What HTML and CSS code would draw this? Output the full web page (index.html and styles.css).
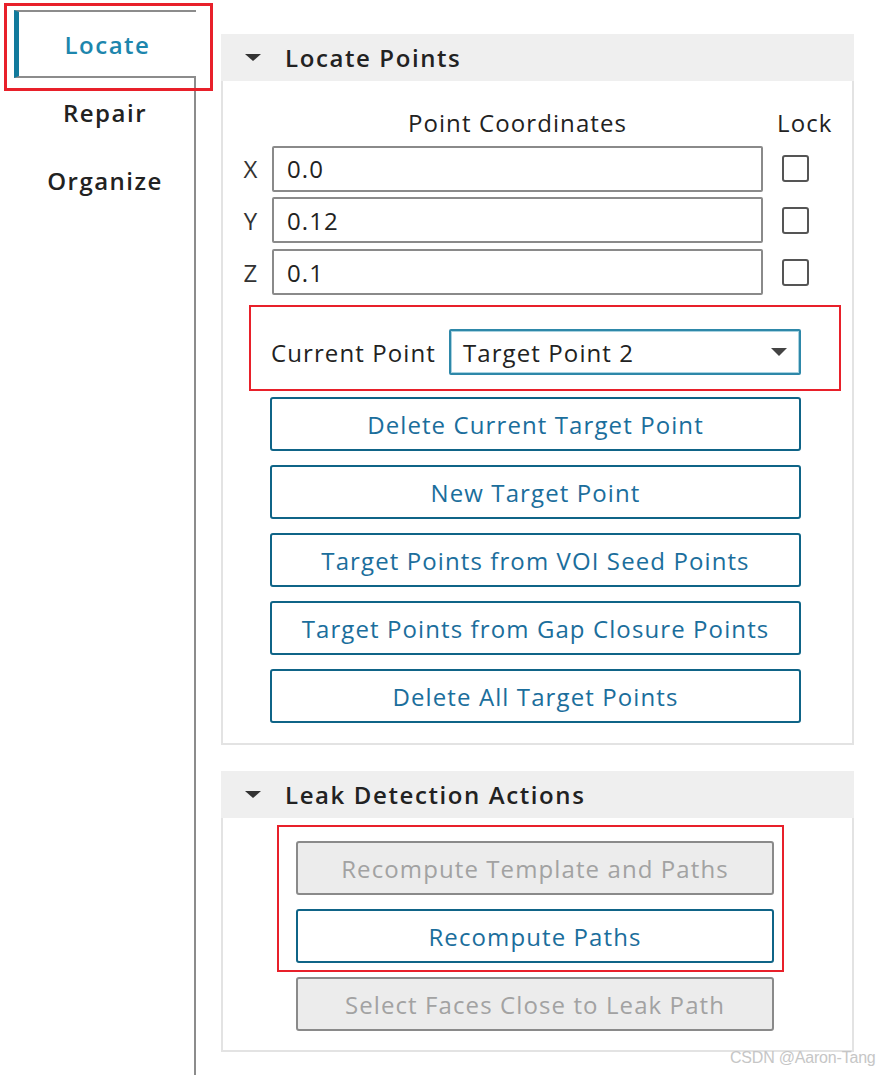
FILE: index.html
```html
<!DOCTYPE html>
<html>
<head>
<meta charset="utf-8">
<link rel="stylesheet" href="styles.css">
</head>
<body>
<div class="page">
  <nav class="nav">
    <div class="tab tab-active">Locate</div>
    <div class="nav-rest">
      <div class="tab">Repair</div>
      <div class="tab">Organize</div>
    </div>
  </nav>
  <main class="content">
    <section class="panel">
      <div class="panel-head"><span class="caret-down"></span><span class="panel-title">Locate Points</span></div>
      <div class="panel-body body-locate">
        <div class="coord-grid">
          <div></div>
          <div class="col-head">Point Coordinates</div>
          <div class="col-head lock-head">Lock</div>

          <div class="axis">X</div>
          <div class="field">0.0</div>
          <div class="check-cell"><span class="check"></span></div>

          <div class="axis">Y</div>
          <div class="field">0.12</div>
          <div class="check-cell"><span class="check"></span></div>

          <div class="axis">Z</div>
          <div class="field">0.1</div>
          <div class="check-cell"><span class="check"></span></div>
        </div>
        <div class="actions">
          <div class="current-row">
            <span class="current-label">Current Point</span>
            <div class="select"><span>Target Point 2</span><span class="select-caret"></span></div>
          </div>
          <div class="btn">Delete Current Target Point</div>
          <div class="btn">New Target Point</div>
          <div class="btn">Target Points from VOI Seed Points</div>
          <div class="btn">Target Points from Gap Closure Points</div>
          <div class="btn">Delete All Target Points</div>
        </div>
      </div>
    </section>
    <section class="panel panel-leak">
      <div class="panel-head"><span class="caret-down"></span><span class="panel-title">Leak Detection Actions</span></div>
      <div class="panel-body body-leak">
        <div class="btn btn-disabled">Recompute Template and Paths</div>
        <div class="btn">Recompute Paths</div>
        <div class="btn btn-disabled">Select Faces Close to Leak Path</div>
      </div>
    </section>
  </main>
</div>
<div class="mark mark-1"></div>
<div class="mark mark-2"></div>
<div class="mark mark-3"></div>
<div class="watermark">CSDN @Aaron-Tang</div>
</body>
</html>
```
FILE: styles.css
```css
html, body {
  margin: 0;
  padding: 0;
  background: #ffffff;
}
body {
  font-family: "Open Sans", "Noto Sans", sans-serif;
  font-size: 24px;
  letter-spacing: 1.1px;
  color: #222;
  width: 880px;
  height: 1075px;
  overflow: hidden;
  position: relative;
}
.page {
  display: flex;
  height: 1075px;
}
.nav {
  width: 196px;
  padding-top: 10px;
  display: flex;
  flex-direction: column;
  box-sizing: border-box;
}
.tab {
  height: 68px;
  display: flex;
  align-items: center;
  justify-content: center;
  font-weight: 600;
  letter-spacing: 1.5px;
  color: #222;
  box-sizing: border-box;
}
.tab-active {
  margin-left: 14px;
  height: 68px;
  border-top: 2px solid #8c8c8c;
  border-bottom: 2px solid #8c8c8c;
  border-left: 5px solid #127a9c;
  color: #1d86ad;
}
.nav-rest {
  flex: 1;
  border-right: 2px solid #8c8c8c;
}
.nav-rest .tab {
  padding-left: 16px;
}
.content {
  margin-left: 25px;
  width: 633px;
  padding-top: 34px;
}
.panel-head {
  height: 47px;
  background: #efefef;
  display: flex;
  align-items: center;
  font-weight: 600;
  letter-spacing: 1.6px;
  color: #222;
}
.caret-down {
  width: 0;
  height: 0;
  border-left: 8px solid transparent;
  border-right: 8px solid transparent;
  border-top: 7px solid #333;
  margin-left: 24px;
  margin-right: 24px;
}
.panel-body {
  border: 2px solid #e3e3e3;
  border-top: none;
  box-sizing: border-box;
  width: 633px;
}
.body-locate {
  padding: 26px 0 20px 7px;
  height: 664px;
}
.coord-grid {
  display: grid;
  grid-template-columns: 42px 491px 65px;
  grid-template-rows: 32px 46px 46px 46px;
  row-gap: 6px;
  align-items: center;
}
.col-head {
  text-align: center;
  color: #222;
  line-height: 32px;
  align-self: start;
}
.lock-head {
  padding-left: 14px;
}
.coord-grid > :nth-child(5) { margin-top: 1px; }
.axis {
  text-align: center;
  color: #333;
}
.field {
  height: 46px;
  border: 2px solid #8a8a8a;
  border-radius: 2px;
  box-sizing: border-box;
  padding-left: 13px;
  display: flex;
  align-items: center;
  color: #222;
}
.check-cell {
  display: flex;
  justify-content: center;
}
.check {
  width: 27px;
  height: 27px;
  border: 2px solid #555;
  border-radius: 3px;
  box-sizing: border-box;
  background: #fff;
}
.actions {
  margin-left: 40px;
  width: 531px;
  display: flex;
  flex-direction: column;
  gap: 14px;
}
.current-row {
  display: flex;
  align-items: center;
  margin-top: 34px;
  margin-bottom: 8px;
  padding-left: 1px;
}
.current-label {
  color: #222;
}
.select {
  flex: 1;
  margin-left: 13px;
  height: 46px;
  border: 2px solid #2e88a9;
  box-shadow: inset 0 0 0 1px #a8d2e0;
  border-radius: 2px;
  box-sizing: border-box;
  display: flex;
  align-items: center;
  justify-content: space-between;
  padding-left: 12px;
  padding-right: 12px;
  color: #222;
}
.select-caret {
  width: 0;
  height: 0;
  border-left: 8px solid transparent;
  border-right: 8px solid transparent;
  border-top: 8px solid #444;
}
.btn {
  height: 54px;
  border: 2px solid #0f6487;
  border-radius: 3px;
  box-sizing: border-box;
  display: flex;
  align-items: center;
  justify-content: center;
  color: #1b6e9c;
  background: #fff;
}
.btn-disabled {
  background: #ececec;
  border-color: #8a8a8a;
  color: #a2a2a2;
}
.panel-leak {
  margin-top: 26px;
}
.body-leak {
  height: 234px;
  padding: 23px 0 0 73px;
  display: flex;
  flex-direction: column;
  gap: 14px;
}
.body-leak .btn {
  width: 478px;
}
.mark {
  position: absolute;
  border: 2px solid #e8202a;
  box-sizing: border-box;
}
.mark-1 {
  left: 4px;
  top: 3px;
  width: 209px;
  height: 88px;
  border-width: 3px;
}
.mark-2 {
  left: 249px;
  top: 305px;
  width: 592px;
  height: 86px;
}
.mark-3 {
  left: 277px;
  top: 825px;
  width: 507px;
  height: 147px;
}
.watermark {
  position: absolute;
  left: 730px;
  top: 1049px;
  font-family: "Liberation Sans", Arial, sans-serif;
  font-size: 16px;
  color: #c6c6c6;
  letter-spacing: -0.2px;
}
```
